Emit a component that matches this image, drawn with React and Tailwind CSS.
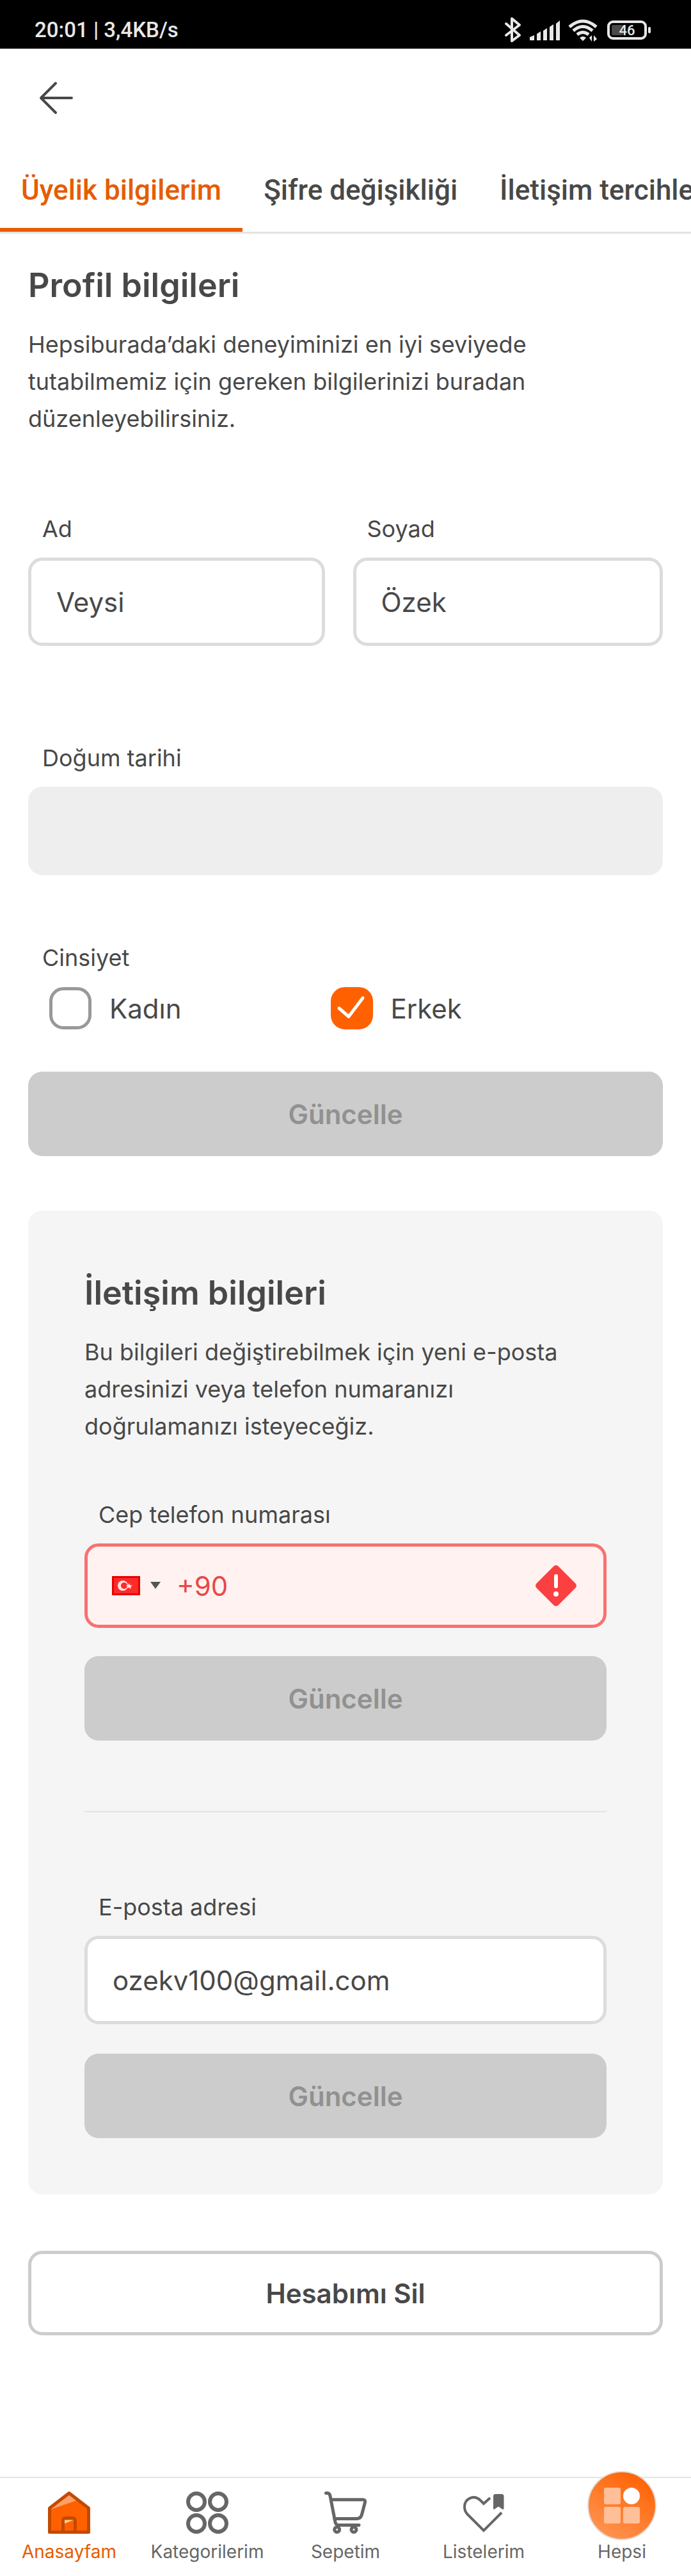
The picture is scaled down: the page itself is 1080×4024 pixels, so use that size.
import React, { useState } from "react";

const tabs = ["Üyelik bilgilerim", "Şifre değişikliği", "İletişim tercihlerim"];

function StatusBar() {
  return (
    <div className="flex h-[76px] items-center justify-between bg-black pl-[54px] pr-[62px] pt-[18px] font-['Roboto',sans-serif] font-medium text-[#e8e8e8]">
      <span className="text-[33px] leading-10">20:01 | 3,4KB/s</span>
      <svg width="230" height="40" viewBox="0 0 230 40" aria-hidden="true">
        <g fill="none" stroke="#e8e8e8" strokeWidth="4" strokeLinejoin="round" strokeLinecap="round">
          <path d="M3 10 L24 28 L12 37 V2 L24 12 L3 28" />
        </g>
        <g fill="#e8e8e8">
          <path d="M40 31 L47 28 V36 H40z M51 26 L57 22 V36 H51z M61 21 L67 17 V36 H61z M71 15 L77 11 V36 H71z M81 10 L87 5 V36 H81z" />
        </g>
        <g fill="none" stroke="#e8e8e8" strokeWidth="5">
          <path d="M102 15 Q123 -3 144 15" />
          <path d="M108 21 Q123 8 138 21" />
          <path d="M114 27 Q123 20 132 27" />
        </g>
        <path d="M118 32 Q123 28 128 32 L123 37z M133 32 L137 28 V38z M140 28 V38 L145 34z" fill="#e8e8e8" />
        <rect x="163" y="7" width="58" height="26" rx="7" fill="none" stroke="#e8e8e8" strokeWidth="4" />
        <rect x="168" y="12" width="18" height="16" rx="2" fill="#4a4a4a" />
        <rect x="225" y="15" width="4" height="10" rx="2" fill="#e8e8e8" />
        <text x="192" y="28" textAnchor="middle" fontFamily="Roboto, sans-serif" fontWeight="500" fontSize="22" fill="#e8e8e8">46</text>
      </svg>
    </div>
  );
}

function Field({ id, label, value, disabled }) {
  return (
    <div className="flex min-w-0 flex-col">
      <label htmlFor={id} className="px-[22px] text-[36px] leading-[58px]">{label}</label>
      <input
        id={id}
        type="text"
        defaultValue={value}
        disabled={disabled}
        className="mt-4 h-[138px] w-full rounded-[22px] border-[5px] border-[#dcdcdc] bg-white px-[39px] text-[42px] outline-none disabled:border-[#eeeeee] disabled:bg-[#eeeeee]"
      />
    </div>
  );
}

function UpdateButton({ className }) {
  return (
    <button type="button" disabled className={`h-[132px] w-full rounded-[22px] bg-[#cccccc] text-[42px] font-semibold text-[#919191] ${className}`}>
      Güncelle
    </button>
  );
}

function Choice({ label, checked, onChange }) {
  return (
    <label className="flex h-[66px] flex-1 items-center gap-[28px] text-[42px]">
      <span className="relative flex size-[66px]">
        <input
          type="checkbox"
          checked={checked}
          onChange={onChange}
          className="size-[66px] appearance-none rounded-[22px] border-[5px] border-[#999999] bg-white checked:border-[#ff6000] checked:bg-[#ff6000]"
        />
        {checked && (
          <svg className="pointer-events-none absolute inset-0" width="66" height="66" viewBox="0 0 66 66" fill="none" stroke="#fff" strokeWidth="5" strokeLinecap="round" strokeLinejoin="round" aria-hidden="true">
            <path d="M13 33 L28 46 L50 17" />
          </svg>
        )}
      </span>
      {label}
    </label>
  );
}

function HomeIcon() {
  return (
    <svg width="66" height="66" viewBox="0 0 66 66" aria-hidden="true">
      <path d="M3 27 L33 3 L63 27 V63 H3z" fill="#ff6000" />
      <path d="M4 28 V26 L33 4 L45 14z" fill="#ffa066" />
      <path d="M23.5 63 V46 Q23.5 41.5 28 41.5 H38 Q42.5 41.5 42.5 46 V63" fill="#ff6000" stroke="#c24a00" strokeWidth="5" />
      <path d="M26 44.5 H40 L26 50z" fill="#ffcf9e" />
      <path d="M2.5 26 L33 2.5 L63.5 26 V63.5 H2.5z" fill="none" stroke="#c24a00" strokeWidth="5" strokeLinejoin="round" />
    </svg>
  );
}

function CategoriesIcon() {
  return (
    <svg width="66" height="66" viewBox="0 0 66 66" fill="none" stroke="#666" strokeWidth="6" aria-hidden="true">
      <circle cx="16" cy="16" r="13" />
      <circle cx="50" cy="16" r="13" />
      <circle cx="16" cy="50" r="13" />
      <circle cx="50" cy="50" r="13" />
    </svg>
  );
}

function CartIcon() {
  return (
    <svg width="66" height="66" viewBox="0 0 66 66" fill="none" stroke="#666" strokeWidth="5" strokeLinecap="round" strokeLinejoin="round" aria-hidden="true">
      <path d="M2.5 2.5 H5 Q8 2.5 9 7 L17 48 Q18 52.5 22 52.5 H54" />
      <path d="M11 12.7 H60 Q64.500 12.7 63.500 17 L58.500 36 Q57 42 51 42.500 H16" />
      <circle cx="19.700" cy="59.500" r="4" />
      <circle cx="46" cy="59.500" r="4" />
    </svg>
  );
}

function ListsIcon() {
  return (
    <svg width="66" height="66" viewBox="0 0 66 66" fill="none" stroke="#666" strokeWidth="4" aria-hidden="true">
      <path d="M43 10 L33 19 L28 14 C18 4 3 11 3 24 Q3 31 8 36 L33 61 L61 33" />
      <path d="M48 7.500 Q48 4 51.500 4 H61 Q64.500 4 64.500 7.500 V26 Q64.500 29 62 27.500 L56 23.500 L50 27.500 Q48 29 48 26z" fill="#666" stroke="none" />
    </svg>
  );
}

function HepsiIcon() {
  return (
    <svg className="-mb-3 shrink-0" width="110" height="112" viewBox="0 0 110 112" aria-hidden="true">
      <defs>
        <linearGradient id="hepsi" x1="0.2" y1="1" x2="0.8" y2="0">
          <stop offset="0" stopColor="#ff9655" />
          <stop offset="1" stopColor="#ff6000" />
        </linearGradient>
      </defs>
      <circle cx="55" cy="56" r="53" fill="url(#hepsi)" stroke="#e2ddda" strokeWidth="2" />
      <g fill="#ffbf99">
        <rect x="27" y="28" width="26" height="26" rx="3" />
        <rect x="27" y="58" width="26" height="26" rx="3" />
        <rect x="57" y="58" width="26" height="26" rx="3" />
      </g>
      <circle cx="70" cy="41" r="13" fill="#fff" />
    </svg>
  );
}

const navItems = [
  { label: "Anasayfam", icon: <HomeIcon />, active: true },
  { label: "Kategorilerim", icon: <CategoriesIcon /> },
  { label: "Sepetim", icon: <CartIcon /> },
  { label: "Listelerim", icon: <ListsIcon /> },
  { label: "Hepsi", icon: <HepsiIcon /> },
];

export default function App() {
  const [gender, setGender] = useState("Erkek");
  return (
    <div className="min-h-screen w-full overflow-x-hidden bg-white font-['Inter',sans-serif] text-[#484848]">
      <StatusBar />

      <header className="flex h-[154px] items-center px-[60px]">
        <button type="button" aria-label="Geri">
          <svg width="56" height="56" viewBox="0 0 56 56" fill="none" stroke="#484848" strokeWidth="4" strokeLinecap="round" strokeLinejoin="round" aria-hidden="true">
            <path d="M52 28 H4 M27 5 L4 28 L27 51" />
          </svg>
        </button>
      </header>

      <nav className="flex h-[135px] overflow-hidden border-b-[3px] border-[#e3e3e3] font-['Roboto',sans-serif] text-[44px] font-medium">
        {tabs.map((tab, i) => (
          <a
            key={tab}
            href="#"
            className={`flex shrink-0 items-center whitespace-nowrap border-b-[6px] px-[33px] pt-2 ${i === 0 ? "border-[#e65c00] text-[#e65c00]" : "border-transparent"}`}
          >
            {tab}
          </a>
        ))}
      </nav>

      <main className="px-[44px] pt-[44px]">
        <h1 className="text-[52px] font-semibold leading-[74px]">Profil bilgileri</h1>
        <p className="mt-[26px] max-w-[860px] text-[36px] leading-[58px]">
          Hepsiburada’daki deneyiminizi en iyi seviyede tutabilmemiz için gereken bilgilerinizi buradan düzenleyebilirsiniz.
        </p>

        <div className="mt-[114px] grid grid-cols-[464fr_485fr] gap-[44px]">
          <Field id="ad" label="Ad" value="Veysi" />
          <Field id="soyad" label="Soyad" value="Özek" />
        </div>

        <div className="mt-[146px]">
          <Field id="dogum" label="Doğum tarihi" value="" disabled />
        </div>

        <fieldset className="mt-[100px]">
          <legend className="px-[22px] text-[36px] leading-[58px]">Cinsiyet</legend>
          <div className="mt-[17px] flex pl-[33px] pr-[80px]">
            {["Kadın", "Erkek"].map((g) => (
              <Choice key={g} label={g} checked={gender === g} onChange={() => setGender(g)} />
            ))}
          </div>
        </fieldset>
        <UpdateButton className="mt-[66px]" />

        <section className="mt-[85px] rounded-[22px] bg-[#f5f5f5] px-[88px] pb-[88px] pt-[92px]">
          <h2 className="text-[52px] font-semibold leading-[74px]">İletişim bilgileri</h2>
          <p className="mt-[26px] text-[36px] leading-[58px]">
            Bu bilgileri değiştirebilmek için yeni e-posta adresinizi veya telefon numaranızı doğrulamanızı isteyeceğiz.
          </p>

          <div className="mt-[80px]">
            <label htmlFor="telefon" className="block px-[22px] text-[36px] leading-[58px]">Cep telefon numarası</label>
            <div className="mt-4 flex h-[132px] items-center rounded-[22px] border-[5px] border-[#f87171] bg-[#fff2f1] pl-[38px] pr-[41px]">
              <button type="button" aria-label="Ülke kodu" className="flex items-center gap-4">
                <svg width="44" height="30" viewBox="0 0 44 30" aria-hidden="true">
                  <rect width="44" height="30" fill="#e80000" />
                  <rect x="3" y="3" width="38" height="24" fill="#ff2a2a" />
                  <circle cx="17" cy="15" r="8" fill="#ffe5e5" />
                  <circle cx="19" cy="15" r="5" fill="#ff2a2a" />
                  <path d="M27 11 L28 14 L32 15 L29 17 L30 20 L26 18 L23 19 L24 16 L22 14 L25 14z" fill="#ffe5e5" />
                </svg>
                <svg width="16" height="12" viewBox="0 0 16 12" aria-hidden="true"><path d="M0 0 H16 L8 11z" fill="#555" /></svg>
              </button>
              <input id="telefon" type="tel" defaultValue="+90" className="ml-[25px] h-full min-w-0 flex-1 bg-transparent text-[42px] text-[#e84848] outline-none" />
              <svg width="66" height="66" viewBox="0 0 66 66" aria-hidden="true">
                <path d="M29 3 Q33 -1 37 3 L63 29 Q67 33 63 37 L37 63 Q33 67 29 63 L3 37 Q-1 33 3 29z" fill="#fa4040" />
                <rect x="30" y="15" width="6" height="22" rx="3" fill="#fff" />
                <circle cx="33" cy="46" r="4" fill="#fff" />
              </svg>
            </div>
            <UpdateButton className="mt-[44px]" />
          </div>

          <hr className="mt-[110px] border-t-2 border-[#e3e3e3]" />

          <div className="mt-[119px]">
            <Field id="eposta" label="E-posta adresi" value="ozekv100@gmail.com" />
            <UpdateButton className="mt-[46px]" />
          </div>
        </section>

        <button type="button" className="mt-[88px] h-[132px] w-full rounded-[22px] border-[5px] border-[#cccccc] bg-white text-[42px] font-semibold">
          Hesabımı Sil
        </button>
      </main>

      <nav className="mt-[221px] grid h-[155px] grid-cols-5 border-t-2 border-[#e3e3e3] text-[28px] text-[#666666]">
        {navItems.map(({ label, icon, active }) => (
          <a key={label} href="#" className={`flex flex-col items-center ${active ? "text-[#e65c00]" : ""}`}>
            <span className="flex h-[87px] items-end justify-center">{icon}</span>
            <span className="mt-2 leading-[40px]">{label}</span>
          </a>
        ))}
      </nav>
    </div>
  );
}
